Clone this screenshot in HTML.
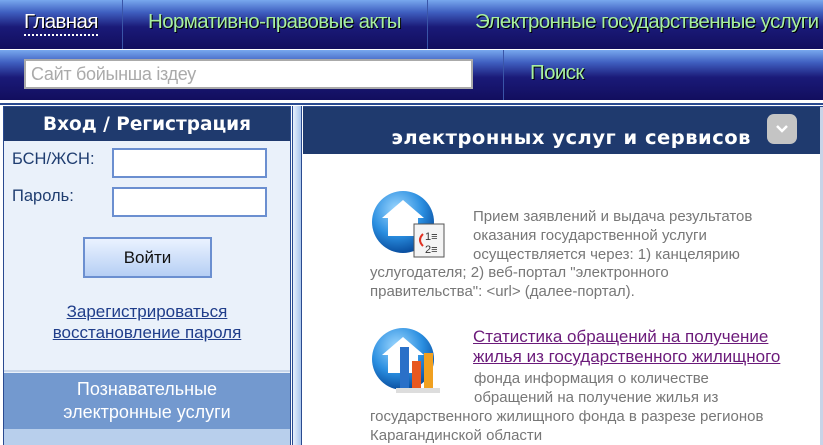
<!DOCTYPE html>
<html><head><meta charset="utf-8"><style>
*{margin:0;padding:0;box-sizing:border-box}
body{width:823px;height:445px;overflow:hidden;background:#fff;font-family:"Liberation Sans",sans-serif;position:relative}
.bar{position:absolute;left:0;width:823px;background:linear-gradient(#78a8ee 0%,#3f5fc0 25%,#1a1a78 55%,#120e5e 100%)}
.nav{top:0;height:49px}
.srch{top:50px;height:50px}
.sep{position:absolute;top:0;width:1px;height:49px;background:#3a55a8}
.nt{position:absolute;top:10px;font-size:20.5px;color:#a8f0a0;text-shadow:1px 1px 0 #000;letter-spacing:-0.6px;white-space:nowrap}
.abs{position:absolute}
.lbl{position:absolute;font-size:16.5px;color:#1f3d70}
.box{position:absolute;background:#fff;border:2px solid #6b8fd0}
.txt{font-size:15px;color:#777;line-height:19px;white-space:nowrap}
</style></head><body>
<div class="bar nav">
 <div class="sep" style="left:122px"></div><div class="sep" style="left:427px"></div>
 <div class="nt" style="left:24px;color:#fff;border-bottom:2px dotted #fff;line-height:24px">Главная</div>
 <div class="nt" style="left:148px">Нормативно-правовые акты</div>
 <div class="nt" style="left:475px">Электронные государственные услуги</div>
</div>
<div class="bar srch">
 <div class="sep" style="left:503px;height:50px"></div>
 <div class="abs" style="left:24px;top:9px;width:449px;height:30px;background:#fff;border:2px solid #aaa;font-size:18px;color:#aaa;padding:3px 5px;letter-spacing:-0.3px">Сайт бойынша iздеу</div>
 <div class="nt" style="left:530px;top:11px">Поиск</div>
</div>
<div class="abs" style="left:0;top:100px;width:823px;height:3px;background:#fff"></div>
<div class="abs" style="left:0;top:103px;width:823px;height:2px;background:#2a4a90"></div>
<!-- left panel -->
<div class="abs" style="left:3px;top:106px;width:288px;height:339px;background:#eaf1fa;border:1px solid #2a4a90"></div>
<div class="abs" style="left:4px;top:107px;width:286px;height:34px;background:#1f3a6e;color:#fff;font-weight:bold;font-size:18.5px;text-align:center;line-height:36px;font-family:'DejaVu Sans',sans-serif">Вход / Регистрация</div>
<div class="lbl" style="left:12px;top:150px">БСН/ЖСН:</div>
<div class="box" style="left:112px;top:148px;width:155px;height:30px"></div>
<div class="lbl" style="left:12px;top:187px">Пароль:</div>
<div class="box" style="left:112px;top:187px;width:155px;height:30px"></div>
<div class="abs" style="left:83px;top:237px;width:129px;height:41px;background:linear-gradient(#eaf2ff,#b6cff4);border:2px solid #6b8fd0;text-align:center;line-height:37px;font-size:17px;color:#111">Войти</div>
<div class="abs" style="left:4px;top:301px;width:286px;text-align:center;font-size:17px;color:#1f3d8a;text-decoration:underline;line-height:21px">Зарегистрироваться<br>восстановление пароля</div>
<div class="abs" style="left:4px;top:370px;width:286px;height:2px;background:#c8d6ea"></div>
<div class="abs" style="left:4px;top:373px;width:286px;height:56px;background:#7399cf;color:#fff;text-align:center;font-size:18px;line-height:23px;padding-top:5px">Познавательные<br>электронные услуги</div>
<div class="abs" style="left:4px;top:429px;width:286px;height:16px;background:#b8cfec"></div>
<!-- gap -->
<div class="abs" style="left:292px;top:106px;width:10px;height:339px;background:linear-gradient(90deg,#e8f0fc,#a8c4ec);border-left:1px solid #2a4a90;border-right:1px solid #2a4a90"></div>
<!-- right panel -->
<div class="abs" style="left:303px;top:106px;width:520px;height:339px;border-top:1px solid #2a4a90"></div>
<div class="abs" style="left:303px;top:107px;width:517px;height:47px;background:#1f3a6e"></div>
<div class="abs" style="left:303px;top:126px;width:448px;text-align:right;color:#fff;font-weight:bold;font-size:19.5px;font-family:'DejaVu Sans',sans-serif;letter-spacing:0.5px;white-space:nowrap">электронных услуг и сервисов</div>
<div class="abs" style="left:767px;top:114px;width:30px;height:30px;background:#c4c4c4;border-radius:7px"><svg width="30" height="30"><path d="M10 12 L15 17 L20 12" stroke="#fff" stroke-width="2.5" fill="none"/></svg></div>
<div class="abs" style="left:820px;top:107px;width:3px;height:338px;background:#c8d4e8"></div>
<svg class="abs" style="left:370px;top:190px" width="78" height="70" viewBox="0 0 78 70">
 <defs><radialGradient id="g" cx="40%" cy="30%" r="70%"><stop offset="0" stop-color="#9ed8ff"/><stop offset=".6" stop-color="#2a8ee0"/><stop offset="1" stop-color="#0a4fa0"/></radialGradient></defs>
 <circle cx="33" cy="32" r="31" fill="url(#g)"/><path d="M33 10 L54 28 H48 V46 H18 V28 H12 Z" fill="#fff"/>
 <rect x="44" y="34" width="30" height="33" fill="#f4f4f4" stroke="#555"/><text x="55" y="50" font-size="11" fill="#333">1≡</text><text x="55" y="63" font-size="11" fill="#333">2≡</text><path d="M53 44 q-6 6 0 12" stroke="#e03020" fill="none" stroke-width="2"/>
</svg>
<svg class="abs" style="left:370px;top:327px" width="78" height="70" viewBox="0 0 78 70">
 <circle cx="33" cy="32" r="31" fill="url(#g)"/><path d="M33 10 L54 28 H48 V46 H18 V28 H12 Z" fill="#fff"/>
 <rect x="30" y="20" width="9" height="42" fill="#2a70c8"/><rect x="42" y="34" width="9" height="28" fill="#e85820"/><rect x="54" y="26" width="9" height="36" fill="#f0a020"/><rect x="26" y="61" width="44" height="5" fill="#ddd"/>
</svg>
<div class="abs txt" style="left:473px;top:207px">Прием заявлений и выдача результатов<br>оказания государственной услуги<br>осуществляется через: 1) канцелярию</div>
<div class="abs txt" style="left:370px;top:263px">услугодателя; 2) веб-портал "электронного<br>правительства": &lt;url&gt; (далее-портал).</div>
<div class="abs" style="left:473px;top:327px;font-size:17px;color:#6b1a7a;text-decoration:underline;line-height:20px;white-space:nowrap">Статистика обращений на получение<br>жилья из государственного жилищного</div>
<div class="abs txt" style="left:474px;top:369px">фонда информация о количестве<br>обращений на получение жилья из</div>
<div class="abs txt" style="left:370px;top:407px">государственного жилищного фонда в разрезе регионов<br>Карагандинской области</div>
</body></html>
